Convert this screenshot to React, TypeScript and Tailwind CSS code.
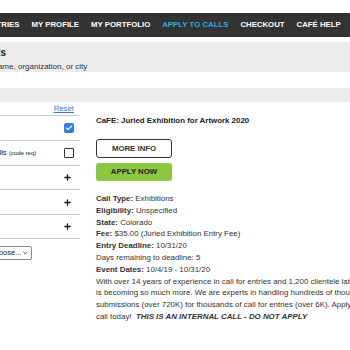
import React from 'react'
import { Check, Plus, ChevronDown } from 'lucide-react'

const navItems = ['MY ENTRIES', 'MY PROFILE', 'MY PORTFOLIO', 'APPLY TO CALLS', 'CHECKOUT', 'CAFÉ HELP', 'LOGOUT']

function Detail({ label, value }: { label: string; value: string }) {
    return (
        <div>
            <span className="font-bold">{label}</span> {value}
        </div>
    )
}

function App() {
    return (
        <div className="w-[350px] h-[350px] overflow-hidden bg-white text-[#222] font-['Liberation_Sans',Arial,sans-serif]">
            <div className="h-[13px]" />

            {/* Top nav */}
            <nav className="h-[24px] bg-[#333333] flex items-center overflow-hidden">
                <div className="flex items-center gap-[12px] -ml-[28px] whitespace-nowrap text-[7.8px] font-bold text-white">
                    {navItems.map((item) => (
                        <span key={item} className={item === 'APPLY TO CALLS' ? 'text-[#27aae1]' : ''}>
                            {item}
                        </span>
                    ))}
                </div>
            </nav>

            <div className="h-[5px]" />

            {/* Search band */}
            <div className="h-[30px] bg-[#ececec] pt-[5px] whitespace-nowrap">
                <div className="-ml-[54px] text-[10px] leading-[12px] font-bold">Search Calls</div>
                <div className="-ml-[59px] mt-[3px] text-[8px] leading-[10px] text-[#333]">
                    Search by call name, organization, or city
                </div>
            </div>

            <div className="h-[16px]" />
            <div className="h-[14px] bg-[#ececec]" />

            {/* Main */}
            <div className="flex">
                {/* Filters */}
                <div className="w-[80px] shrink-0">
                    <div className="h-[13px] flex items-center justify-end pr-[6px]">
                        <span className="text-[7.8px] leading-[10px] text-[#3a78d4] underline">Reset</span>
                    </div>
                    <div className="h-[25px] border-t border-[#cccccc] flex items-center justify-end pr-[6px]">
                        <span className="w-[10px] h-[10px] rounded-[2px] bg-[#2f7de1] flex items-center justify-center">
                            <Check size={8} strokeWidth={3.5} color="#fff" />
                        </span>
                    </div>
                    <div className="h-[25px] border-t border-[#cccccc] flex items-center justify-between pr-[6px] whitespace-nowrap">
                        <span className="-ml-[37px] text-[7.8px] text-[#222]">
                            Private Calls <span className="text-[6px]">(code req)</span>
                        </span>
                        <span className="w-[10px] h-[10px] border-[1.5px] border-[#333] rounded-[1px] bg-white" />
                    </div>
                    <div className="h-[24px] border-t border-[#cccccc] flex items-center justify-end pr-[8px]">
                        <Plus size={9} strokeWidth={3.5} color="#111" />
                    </div>
                    <div className="h-[25px] border-t border-[#cccccc] flex items-center justify-end pr-[8px]">
                        <Plus size={9} strokeWidth={3.5} color="#111" />
                    </div>
                    <div className="h-[25px] border-y border-[#cccccc] flex items-center justify-end pr-[8px]">
                        <Plus size={9} strokeWidth={3.5} color="#111" />
                    </div>
                    <div className="mt-[7px] -ml-[15px] w-[47px] h-[14px] border border-[#888] rounded-[2px] bg-white flex items-center justify-between pl-[3px] pr-[3px] text-[7.6px] whitespace-nowrap">
                        <span>Choose...</span>
                        <ChevronDown size={8} strokeWidth={3} color="#222" />
                    </div>
                </div>

                {/* Call detail */}
                <div className="ml-[16px] pt-[14px] whitespace-nowrap">
                    <div className="text-[7.9px] leading-[10px] font-bold">CaFE: Juried Exhibition for Artwork 2020</div>
                    <div className="mt-[13px] w-[76px] h-[19px] border-[1.5px] border-[#333] rounded-[3px] bg-white flex items-center justify-center text-[7.8px] font-bold text-[#333]">
                        MORE INFO
                    </div>
                    <div className="mt-[5px] w-[76px] h-[18px] rounded-[3px] bg-[#8dc63f] flex items-center justify-center text-[7.8px] font-bold text-[#222]">
                        APPLY NOW
                    </div>
                    <div className="mt-[12px] text-[7.9px] leading-[11.8px] text-[#333]">
                        <Detail label="Call Type:" value="Exhibitions" />
                        <Detail label="Eligibility:" value="Unspecified" />
                        <Detail label="State:" value="Colorado" />
                        <Detail label="Fee:" value="$35.00 (Juried Exhibition Entry Fee)" />
                        <Detail label="Entry Deadline:" value="10/31/20" />
                        <div>Days remaining to deadline: 5</div>
                        <Detail label="Event Dates:" value="10/4/19 - 10/31/20" />
                        <div>With over 14 years of experience in call for entries and 1,200 clientele later, CaFE</div>
                        <div>is becoming so much more. We are experts in handling hundreds of thousands of</div>
                        <div>submissions (over 720K) for thousands of call for entries (over 6K). Apply to this</div>
                        <div>
                            call today!&nbsp;&nbsp;<span className="font-bold italic">THIS IS AN INTERNAL CALL - DO NOT APPLY</span>
                        </div>
                    </div>
                </div>
            </div>
        </div>
    )
}

export default App
